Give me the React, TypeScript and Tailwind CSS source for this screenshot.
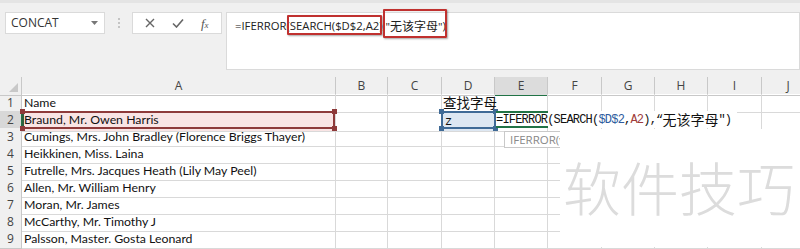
import React from "react";

const cols = ["A", "B", "C", "D", "E", "F", "G", "H", "I", "J"];
const gridCols =
  "grid grid-cols-[22px_314px_52px_54px_53px_53px_54px_53px_53px_54px_53px]";

const names = [
  "Name",
  "Braund, Mr. Owen Harris",
  "Cumings, Mrs. John Bradley (Florence Briggs Thayer)",
  "Heikkinen, Miss. Laina",
  "Futrelle, Mrs. Jacques Heath (Lily May Peel)",
  "Allen, Mr. William Henry",
  "Moran, Mr. James",
  "McCarthy, Mr. Timothy J",
  "Palsson, Master. Gosta Leonard",
];

const uiFont = "font-['Open_Sans','Noto_Sans','Liberation_Sans',sans-serif]";
const cellFont = "font-['Lato','Open_Sans',sans-serif]";
const cjk = "font-['Noto_Sans_CJK_SC',sans-serif]";

function Handle({ className }: { className: string }) {
  return <span className={`absolute w-[5px] h-[5px] ${className}`} />;
}

function TopBar() {
  return (
    <div className="h-[77px] bg-[#f0f0f0] border-t-[3px] border-[#e4e4e4] flex items-start pt-[9px] pl-[5px]">
      {/* name box */}
      <div className="w-[100px] h-[22px] bg-white border border-[#dadada] flex items-center justify-between pl-[5px] pr-[6px]">
        <span className={`${uiFont} text-[12px] text-[#333]`}>CONCAT</span>
        <svg width="7" height="4" viewBox="0 0 7 4">
          <path d="M0 0 L7 0 L3.5 4 Z" fill="#777" />
        </svg>
      </div>
      <div className="w-[27px] h-[22px] flex flex-col items-center justify-center gap-[2px]">
        <span className="w-[2px] h-[2px] bg-[#c4c4c4]" />
        <span className="w-[2px] h-[2px] bg-[#c4c4c4]" />
        <span className="w-[2px] h-[2px] bg-[#c4c4c4]" />
      </div>
      {/* buttons */}
      <div className="w-[90px] h-[22px] bg-white border border-[#dadada] flex items-center justify-around px-[4px]">
        <svg width="10" height="10" viewBox="0 0 10 10">
          <path d="M1 1 L9 9 M9 1 L1 9" stroke="#666" strokeWidth="1.4" />
        </svg>
        <svg width="12" height="10" viewBox="0 0 12 10">
          <path d="M1 5.5 L4.5 9 L11 1.5" stroke="#666" strokeWidth="1.6" fill="none" />
        </svg>
        <span className="font-['Liberation_Serif',serif] italic text-[13px] text-[#555] leading-none">
          f<span className="text-[9px]">x</span>
        </span>
      </div>
      {/* formula box */}
      <div className="ml-[4px] flex-1 h-[58px] bg-white border border-[#dadada] pl-[8px] pt-[4px]">
        <div className={`${uiFont} text-[11.3px] text-[#222] whitespace-nowrap flex items-center h-[18px]`}>
          <span>=IFERROR(</span>
          <span className="relative">
            SEARCH($D$2,A2
            <span className="absolute -left-[3px] -right-[3px] -top-[3px] -bottom-[1px] border-2 border-[#c0312f] rounded-[1px] shadow-[1px_1px_2px_rgba(0,0,0,0.35)]" />
          </span>
          <span>),</span>
          <span className="relative">
            "<span className={`${cjk} text-[12px]`}>无该字母</span>"
            <span className="absolute -left-[3px] -right-[4px] -top-[8px] -bottom-[3px] border-2 border-[#c0312f] rounded-[1px] shadow-[1px_1px_2px_rgba(0,0,0,0.35)]" />
          </span>
          <span>)</span>
        </div>
      </div>
    </div>
  );
}

function HeaderRow() {
  return (
    <div className={`${gridCols} h-[17px] bg-[#f0f0f0]`}>
      <div className="border-r border-b border-[#c8c8c8] relative">
        <svg className="absolute right-[3px] bottom-[3px]" width="9" height="9" viewBox="0 0 9 9">
          <path d="M9 0 L9 9 L0 9 Z" fill="#c8c8c8" />
        </svg>
      </div>
      {cols.map((c) => (
        <div
          key={c}
          className={`border-r border-b ${uiFont} text-[12px] leading-[18px] text-[#444] text-center ${
            c === "E" ? "bg-[#dcdcdc] border-b-[#217346] border-r-[#c8c8c8]" : "border-[#c8c8c8]"
          }`}
        >
          {c}
        </div>
      ))}
    </div>
  );
}

function Row({ n, name }: { n: number; name: string }) {
  return (
    <div className={`${gridCols} h-[17px] leading-[16px]`}>
      <div
        className={`border-r border-b ${uiFont} text-[12px] leading-[18px] text-[#444] text-center ${
          n === 2 ? "bg-[#d8d8d8] border-b-[#c8c8c8] border-r-[#217346]" : "bg-[#f0f0f0] border-[#c8c8c8]"
        }`}
      >
        {n}
      </div>
      <div
        className={`border-r border-b border-[#d9d9d9] ${cellFont} text-[12.3px] leading-[18px] text-[#111] pl-[2px] whitespace-nowrap ${
          n === 2 ? "bg-[#f9e4e4]" : ""
        }`}
      >
        {name}
      </div>
      {cols.slice(1).map((c) => (
        <div
          key={c}
          className={`border-r border-b border-[#d9d9d9] whitespace-nowrap leading-[17px] ${
            c === "D" && n === 2 ? "bg-[#dde7f2]" : ""
          }`}
        >
          {c === "D" && n === 1 && (
            <span className={`${cjk} text-[13.5px] leading-[16px] text-[#111] pl-[1px]`}>
              查找字母
            </span>
          )}
          {c === "D" && n === 2 && (
            <span className="font-['Liberation_Mono',monospace] text-[12px] leading-[17px] text-[#111] pl-[3px]">
              z
            </span>
          )}
        </div>
      ))}
    </div>
  );
}

export default function App() {
  return (
    <div className="w-[800px] h-[249px] overflow-hidden bg-white relative">
      <TopBar />
      <div className="relative">
        <HeaderRow />
        {names.map((name, i) => (
          <Row key={i} n={i + 1} name={name} />
        ))}

        {/* A2 reference highlight */}
        <div className="absolute left-[22px] top-[34px] w-[313px] h-[18px] border-2 border-[#8e3a3a] border-l-[#2f5f3f] pointer-events-none">
          <Handle className="-left-[4px] -top-[4px] bg-[#8e3a3a]" />
          <Handle className="-right-[4px] -top-[4px] bg-[#8e3a3a]" />
          <Handle className="-left-[4px] -bottom-[4px] bg-[#8e3a3a]" />
          <Handle className="-right-[4px] -bottom-[4px] bg-[#8e3a3a]" />
        </div>

        {/* D2 reference highlight */}
        <div className="absolute left-[441px] top-[34px] w-[55px] h-[18px] border-2 border-[#3f6a96] pointer-events-none">
          <Handle className="-left-[4px] -top-[4px] bg-[#3f6a96]" />
          <Handle className="-right-[4px] -top-[4px] bg-[#3f6a96]" />
          <Handle className="-left-[4px] -bottom-[4px] bg-[#3f6a96]" />
          <Handle className="-right-[4px] -bottom-[4px] bg-[#3f6a96]" />
        </div>

        {/* E2 editing cell */}
        <div className="absolute left-[496px] top-[34px] h-[17px] bg-white pr-[6px] flex items-center whitespace-nowrap font-['Liberation_Mono',monospace] text-[12px] tracking-[-0.8px] text-[#111]">
          <span className="absolute left-0 top-0 w-[52px] h-[17px] border-y-2 border-[#217346]" />
          <span className="relative">=IFERROR(SEARCH(</span>
          <span className="relative text-[#2e5c9e]">$D$2</span>
          <span className="relative">,</span>
          <span className="relative text-[#a03c3a]">A2</span>
          <span className="relative">),“</span>
          <span className={`relative ${cjk} text-[14px] tracking-normal`}>无该字母</span>
          <span className="relative">")</span>
        </div>

        {/* tooltip, cut by the watermark panel */}
        <div className={`absolute left-[504px] top-[54px] h-[17px] w-[56px] overflow-hidden whitespace-nowrap bg-white border border-r-0 border-[#c9c9c9] pl-[5px] ${uiFont} text-[11.5px] leading-[15px] text-[#888]`}>
          IFERROR(v
        </div>

        {/* watermark overlay */}
        <div className="absolute left-[560px] top-[52px] right-0 bottom-0 bg-white">
          <div className={`${cjk} font-light text-[58px] leading-none text-[#dcdcdc] pt-[28px] pl-[3px] whitespace-nowrap`}>
            软件技巧
          </div>
        </div>
      </div>
    </div>
  );
}
